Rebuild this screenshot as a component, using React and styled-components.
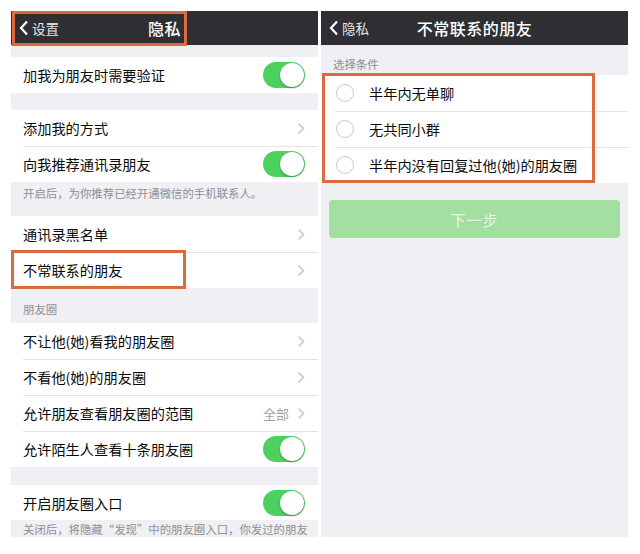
import React from 'react'
import styled, { createGlobalStyle } from 'styled-components'

const GlobalStyle = createGlobalStyle`
body {
  margin: 0;
  background: #fff;
  font-family: 'Noto Sans CJK SC', 'Noto Sans', sans-serif;
}
`

const Page = styled.div`
display: flex;
gap: 3px;
padding: 11px 0 0 11px;
height: 554px;
box-sizing: border-box;
`

const Phone = styled.div`
position: relative;
width: 307px;
height: 526px;
background: #efeff4;
overflow: hidden;
display: flex;
flex-direction: column;
`

const NavBar = styled.div`
position: relative;
height: 34px;
flex-shrink: 0;
background: #2f2f33;
display: grid;
grid-template-columns: 1fr auto 1fr;
align-items: center;
color: #fff;
`

const Back = styled.div`
display: flex;
align-items: center;
gap: 3px;
padding-left: 8px;
font-size: 13.5px;
color: #e8e8ea;
`

const Title = styled.div`
font-size: 16px;
font-weight: 500;
letter-spacing: 0.5px;
`

const Gap = styled.div`
height: ${p => p.$h}px;
flex-shrink: 0;
`

const Group = styled.div`
position: relative;
background: #fff;
flex-shrink: 0;
`

const Row = styled.div`
position: relative;
height: ${p => p.$h || 36}px;
display: flex;
align-items: center;
padding: 0 13px 0 ${p => p.$pad || 12}px;
font-size: 14.2px;
color: #0a0a0a;

& + &::before {
  content: '';
  position: absolute;
  top: 0;
  left: ${p => p.$line || 12}px;
  right: 0;
  height: 1px;
  background: #e3e3e6;
}
`

const Label = styled.span`
flex: 1;
white-space: nowrap;
`

const Value = styled.span`
font-size: 13px;
color: #a0a0a5;
margin-right: 8px;
`

const Note = styled.div`
height: ${p => p.$h}px;
flex-shrink: 0;
padding: ${p => p.$top}px 0 0 12px;
box-sizing: border-box;
font-size: 11.4px;
color: #8e8e93;
white-space: nowrap;
overflow: hidden;
`

const Switch = styled.div`
position: relative;
width: 42px;
height: 26px;
border-radius: 13px;
background: #4cd15f;

&::after {
  content: '';
  position: absolute;
  top: 1px;
  right: 1px;
  width: 24px;
  height: 24px;
  border-radius: 50%;
  background: #fff;
  box-shadow: 0 1px 2px rgba(0, 0, 0, 0.35);
}
`

const Radio = styled.span`
width: 18px;
height: 18px;
border-radius: 50%;
border: 1px solid #c9c9ce;
box-sizing: border-box;
margin: 0 15px 0 1px;
flex-shrink: 0;
`

const NextButton = styled.div`
margin: 17px 8px 0;
height: 38px;
border-radius: 4px;
background: #a2dfa0;
color: rgba(255, 255, 255, 0.75);
display: flex;
align-items: center;
justify-content: center;
font-size: 15px;
letter-spacing: 1px;
`

const Mark = styled.div`
position: absolute;
top: ${p => p.$top}px;
left: ${p => p.$left}px;
width: ${p => p.$w}px;
height: ${p => p.$h}px;
border: 3px solid #dc6a3f;
box-sizing: border-box;
pointer-events: none;
z-index: 2;
`

const Chevron = () => (
  <svg width="8" height="13" viewBox="0 0 8 13">
    <path d="M1.5 1.5 L6.5 6.5 L1.5 11.5" fill="none" stroke="#c7c7cc" strokeWidth="1.6" />
  </svg>
)

const BackArrow = () => (
  <svg width="10" height="16" viewBox="0 0 10 16">
    <path d="M8 1.5 L2 8 L8 14.5" fill="none" stroke="#fff" strokeWidth="2.2" />
  </svg>
)

const Nav = ({ back, title }) => (
  <NavBar>
    <Back><BackArrow />{back}</Back>
    <Title>{title}</Title>
    <div />
  </NavBar>
)

const LinkRow = ({ children, value }) => (
  <Row>
    <Label>{children}</Label>
    {value && <Value>{value}</Value>}
    <Chevron />
  </Row>
)

const SwitchRow = ({ children, h }) => (
  <Row $h={h}>
    <Label>{children}</Label>
    <Switch />
  </Row>
)

const options = ['半年内无单聊', '无共同小群', '半年内没有回复过他(她)的朋友圈']

export default function App() {
  return (
    <>
      <GlobalStyle />
      <Page>
        <Phone>
          <Mark $top={0} $left={1} $w={175} $h={35} />
          <Nav back="设置" title="隐私" />
          <Gap $h={12} />
          <Group>
            <SwitchRow>加我为朋友时需要验证</SwitchRow>
          </Group>
          <Gap $h={17} />
          <Group>
            <LinkRow>添加我的方式</LinkRow>
            <SwitchRow>向我推荐通讯录朋友</SwitchRow>
          </Group>
          <Note $h={34} $top={3}>开启后，为你推荐已经开通微信的手机联系人。</Note>
          <Group>
            <LinkRow>通讯录黑名单</LinkRow>
            <LinkRow>不常联系的朋友</LinkRow>
            <Mark $top={34} $left={0} $w={175} $h={39} />
          </Group>
          <Note $h={35} $top={13}>朋友圈</Note>
          <Group>
            <LinkRow>不让他(她)看我的朋友圈</LinkRow>
            <LinkRow>不看他(她)的朋友圈</LinkRow>
            <LinkRow value="全部">允许朋友查看朋友圈的范围</LinkRow>
            <SwitchRow>允许陌生人查看十条朋友圈</SwitchRow>
          </Group>
          <Gap $h={18} />
          <Group>
            <SwitchRow h={35}>开启朋友圈入口</SwitchRow>
          </Group>
          <Note $h={20} $top={1}>关闭后，将隐藏“发现”中的朋友圈入口，你发过的朋友</Note>
        </Phone>

        <Phone>
          <Nav back="隐私" title="不常联系的朋友" />
          <Note $h={30} $top={11}>选择条件</Note>
          <Group>
            <Mark $top={-2} $left={1} $w={273} $h={110} />
            {options.map(o => (
              <Row key={o} $pad={14} $line={14}>
                <Radio />
                <Label>{o}</Label>
              </Row>
            ))}
          </Group>
          <NextButton>下一步</NextButton>
        </Phone>
      </Page>
    </>
  )
}
